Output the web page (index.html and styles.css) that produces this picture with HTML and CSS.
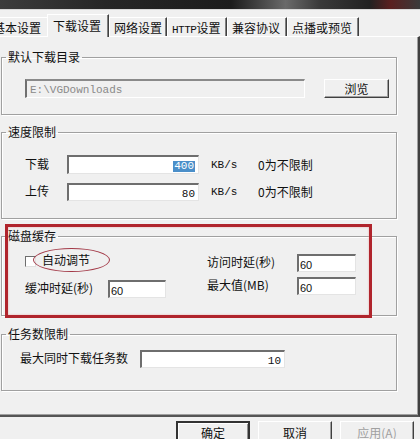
FILE: index.html
```html
<!DOCTYPE html>
<html lang="zh-CN">
<head>
    <meta charset="UTF-8">
    <title>下载设置</title>
    <link rel="stylesheet" href="styles.css">
</head>
<body>
    <div class="dialog">
        <div class="titlebar"></div>
        <div class="tabs">
            <div class="tab first">基本设置</div>
            <div class="tab active">下载设置</div>
            <div class="tab">网络设置</div>
            <div class="tab w60"><span class="latin">HTTP</span>设置</div>
            <div class="tab w60">兼容协议</div>
            <div class="tab w72">点播或预览</div>
        </div>

        <div class="panel">
            <fieldset class="group g-dir">
                <legend>默认下载目录</legend>
                <div class="row">
                    <div class="field disabled w280 mono">E:\VGDownloads</div>
                    <div class="btn browse">浏览</div>
                </div>
            </fieldset>

            <fieldset class="group g-speed">
                <legend>速度限制</legend>
                <div class="row">
                    <span class="label w42">下载</span>
                    <div class="field w132 right mono"><span class="sel">400</span></div>
                    <span class="unit mono">KB/s</span>
                    <span>0为不限制</span>
                </div>
                <div class="row">
                    <span class="label w42">上传</span>
                    <div class="field w132 right mono short">80</div>
                    <span class="unit mono">KB/s</span>
                    <span>0为不限制</span>
                </div>
            </fieldset>

            <fieldset class="group g-cache">
                <legend>磁盘缓存</legend>
                <div class="cache-grid">
                    <div class="cell">
                        <span class="check"></span>
                        <span class="auto">自动调节<span class="ring"></span></span>
                    </div>
                    <div class="cell">
                        <span class="label w90">访问时延(秒)</span>
                        <div class="field w59 num">60</div>
                    </div>
                    <div class="cell low">
                        <span class="label w83">缓冲时延(秒)</span>
                        <div class="field w58 num">60</div>
                    </div>
                    <div class="cell">
                        <span class="label w90">最大值(MB)</span>
                        <div class="field w59 num">60</div>
                    </div>
                </div>
            </fieldset>

            <fieldset class="group g-task">
                <legend>任务数限制</legend>
                <div class="row">
                    <span class="label w118">最大同时下载任务数</span>
                    <div class="field w145 right mono short">10</div>
                </div>
            </fieldset>
        </div>

        <div class="buttons">
            <div class="btn default">确定</div>
            <div class="btn">取消</div>
            <div class="btn off">应用(A)</div>
        </div>

        <div class="highlight"></div>
    </div>
</body>
</html>
```

FILE: styles.css
```css
* {
    box-sizing: border-box;
}
body {
    margin: 0;
    width: 420px;
    height: 439px;
    overflow: hidden;
    background: #f0f0f0;
    font-family: "Noto Sans CJK SC", sans-serif;
    font-size: 12px;
    line-height: 12px;
    color: #111;
}
.dialog {
    position: relative;
    height: 439px;
}
.titlebar {
    height: 10px;
    background: linear-gradient(to right, #3c3c3c 0, #262626 25%, #1c1c1c 55%, #6a6a6a 68%, #3a3a3a 76%, #222 88%, #5a2020 93%, #3a3a3a 100%);
    border-bottom: 1px solid #d8d8d8;
}

/* tabs */
.tabs {
    display: flex;
    align-items: flex-end;
    height: 26px;
    margin-left: -10px;
}
.tab {
    width: 58px;
    height: 19px;
    padding: 4px 0 0 4px;
    border-left: 1px solid #fff;
    border-top: 1px solid #fff;
    border-right: 1px solid #404040;
    box-shadow: inset -1px 0 0 #808080;
    white-space: nowrap;
    font-size: 12px;
}
.tab.first {
    width: 57px;
    padding-left: 2px;
    border-right: none;
    box-shadow: none;
}
.tab.active {
    width: 62px;
    height: 23px;
    padding: 5px 0 0 5px;
    margin-bottom: -1px;
    background: #f0f0f0;
    position: relative;
    z-index: 1;
}
.tab.w60 {
    width: 60px;
}
.tab.w72 {
    width: 72px;
}
.latin {
    font-family: "Liberation Mono", monospace;
    font-size: 11px;
    letter-spacing: -0.5px;
}

/* panel */
.panel {
    height: 381px;
    padding-top: 14px;
    border-top: 1px solid #fff;
    border-right: 2px solid #404040;
    border-bottom: 2px solid #555;
    box-shadow: inset -1px -1px 0 #a0a0a0;
}
.group {
    margin: 0 21px 0 1px;
    padding: 16px 0 16px 23px;
    border: 1px solid #a0a0a0;
    box-shadow: inset 1px 1px 0 #fff, 1px 1px 0 #fff;
    min-width: 0;
}
.group legend {
    margin-left: -19px;
    padding: 0 2px;
    line-height: 12px;
}
.g-speed {
    margin-top: 11px;
    padding-top: 17px;
    padding-bottom: 17px;
}
.g-cache {
    margin-top: 11px;
    padding-top: 12px;
    padding-bottom: 17px;
}
.g-task {
    margin-top: 12px;
    padding: 10px 0 22px 18px;
}
.g-task legend {
    margin-left: -14px;
}

.row {
    display: flex;
    align-items: center;
}
.g-speed .row + .row {
    margin-top: 9px;
}
.label {
    flex: none;
    padding-bottom: 2px;
}
.w42 { width: 42px; }
.w83 { width: 83px; }
.w90 { width: 90px; }
.w118 { width: 120px; }

/* text boxes */
.field {
    flex: none;
    height: 19px;
    padding: 3px 3px 0;
    background: #fff;
    border-top: 2px solid #6e6e6e;
    border-left: 2px solid #6e6e6e;
    border-right: 1px solid #e4e4e4;
    border-bottom: 1px solid #e4e4e4;
    white-space: nowrap;
}
.field.short {
    height: 18px;
}
.field.disabled {
    background: #f0f0f0;
    color: #8a8a8a;
    border-top-color: #8a8a8a;
    border-left-color: #707070;
    border-right-color: #fff;
    border-bottom-color: #fff;
}
.field.right {
    text-align: right;
}
.mono {
    font-family: "Liberation Mono", monospace;
    font-size: 11px;
}
.num {
    font-family: "Liberation Sans", sans-serif;
    font-size: 11px;
    height: 18px;
    padding-left: 1px;
}
.w280 { width: 280px; }
.w132 { width: 132px; }
.w145 { width: 145px; }
.w59 { width: 59px; }
.w58 { width: 58px; }
.sel {
    display: inline-block;
    background: #4b8fc9;
    color: #fff;
    padding: 0 1px;
    line-height: 11px;
}
.unit {
    width: 47px;
    margin-left: 12px;
}

/* buttons */
.btn {
    flex: none;
    width: 65px;
    height: 19px;
    padding-top: 3px;
    text-align: center;
    background: #f0f0f0;
    border-top: 1px solid #fff;
    border-left: 1px solid #fff;
    border-right: 1px solid #404040;
    border-bottom: 1px solid #404040;
    box-shadow: inset -1px -1px 0 #a0a0a0;
}
.browse {
    margin-left: 19px;
}
.buttons {
    display: flex;
    gap: 8px;
    padding: 4px 0 0 176px;
}
.buttons .btn {
    width: 74px;
    height: 24px;
    padding-top: 5px;
}
.buttons .btn.default {
    border: 2px solid #333;
    box-shadow: inset 1px 1px 0 #fff, inset -1px -1px 0 #909090;
    padding-top: 4px;
}
.buttons .btn.off {
    color: #a0a0a0;
}

/* disk cache grid */
.cache-grid {
    display: grid;
    grid-template-columns: 182px 1fr;
    row-gap: 5px;
}
.cell {
    display: flex;
    align-items: center;
    height: 18px;
}
.cell.low {
    margin-top: 3px;
}
.check {
    width: 11px;
    height: 11px;
    background: #fff;
    border-top: 1px solid #6e6e6e;
    border-left: 1px solid #6e6e6e;
    border-right: 1px solid #e0e0e0;
    border-bottom: 1px solid #e0e0e0;
    margin-top: -4px;
}
.auto {
    position: relative;
    margin-left: 6px;
    margin-top: -6px;
}
.ring {
    position: absolute;
    left: -9px;
    top: -6px;
    width: 77px;
    height: 24px;
    border: 1px solid #a33a48;
    border-radius: 50%;
}

/* red annotation frame */
.highlight {
    position: absolute;
    left: 5px;
    top: 224px;
    width: 367px;
    height: 94px;
    border: 3px solid #b0242c;
    box-shadow: inset 0 0 2px #e8a0a0;
    pointer-events: none;
}
```
